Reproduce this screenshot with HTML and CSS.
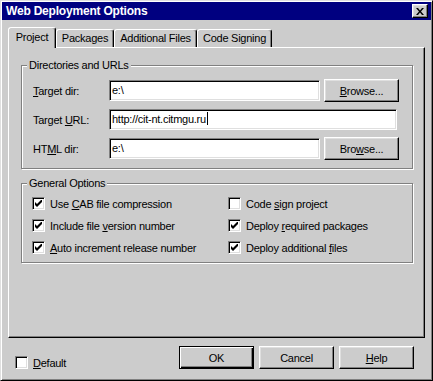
FILE: index.html
```html
<!DOCTYPE html>
<html lang="en">
<head>
    <meta charset="UTF-8">
    <meta name="viewport" content="width=device-width, initial-scale=1.0">
    <title>Web Deployment Options</title>
    <link rel="stylesheet" href="styles.css">
</head>
<body>
    <div class="window">
        <div class="titlebar">
            <span class="title">Web Deployment Options</span>
            <button class="close-btn">
                <svg width="8" height="7" viewBox="0 0 8 7"><path d="M0,0h2l2,2.5l2,-2.5h2l-3,3.5l3,3.5h-2l-2,-2.5l-2,2.5h-2l3,-3.5z" fill="#000"/></svg>
            </button>
        </div>
        <div class="content">
            <!-- Tabs -->
            <div class="tabs">
                <div class="tab active tab-project">Project</div>
                <div class="tab tab-packages">Packages</div>
                <div class="tab tab-files">Additional Files</div>
                <div class="tab tab-signing">Code Signing</div>
            </div>
            <div class="panel">
                <div class="group group-dirs">
                    <div class="group-title">Directories and URLs</div>
                    <div class="field-row first">
                        <span class="field-label"><u>T</u>arget dir:</span>
                        <div class="textbox short">e:\</div>
                        <button class="btn"><u>B</u>rowse...</button>
                    </div>
                    <div class="field-row">
                        <span class="field-label">Target <u>U</u>RL:</span>
                        <div class="textbox long">http://cit-nt.citmgu.ru<span class="caret"></span></div>
                    </div>
                    <div class="field-row">
                        <span class="field-label">HT<u>M</u>L dir:</span>
                        <div class="textbox short">e:\</div>
                        <button class="btn">Bro<u>w</u>se...</button>
                    </div>
                </div>
                <div class="group group-options">
                    <div class="group-title">General Options</div>
                    <div class="checks">
                        <div class="check"><span class="box"><svg width="7" height="7" viewBox="0 0 7 7"><path d="M0,2l2,2l5,-5v3l-5,5l-2,-2z" fill="#000"/></svg></span><span>Use <u>C</u>AB file compression</span></div>
                        <div class="check"><span class="box"></span><span>Code <u>s</u>ign project</span></div>
                        <div class="check"><span class="box"><svg width="7" height="7" viewBox="0 0 7 7"><path d="M0,2l2,2l5,-5v3l-5,5l-2,-2z" fill="#000"/></svg></span><span>Include file <u>v</u>ersion number</span></div>
                        <div class="check"><span class="box"><svg width="7" height="7" viewBox="0 0 7 7"><path d="M0,2l2,2l5,-5v3l-5,5l-2,-2z" fill="#000"/></svg></span><span>Deploy <u>r</u>equired packages</span></div>
                        <div class="check"><span class="box"><svg width="7" height="7" viewBox="0 0 7 7"><path d="M0,2l2,2l5,-5v3l-5,5l-2,-2z" fill="#000"/></svg></span><span><u>A</u>uto increment release number</span></div>
                        <div class="check"><span class="box"><svg width="7" height="7" viewBox="0 0 7 7"><path d="M0,2l2,2l5,-5v3l-5,5l-2,-2z" fill="#000"/></svg></span><span>Deploy additional <u>f</u>iles</span></div>
                    </div>
                </div>
            </div>
            <div class="footer">
                <div class="check default-check"><span class="box"></span><span><u>D</u>efault</span></div>
                <div class="buttons">
                    <button class="btn default-btn">OK</button>
                    <button class="btn">Cancel</button>
                    <button class="btn"><u>H</u>elp</button>
                </div>
            </div>
        </div>
    </div>
</body>
</html>
```

FILE: styles.css
```css
*{
    box-sizing: border-box;
}
body{
    margin: 0;
    font-family: "Liberation Sans", Arial, sans-serif;
    font-size: 11px;
    letter-spacing: -0.25px;
    color: black;
    background-color: #cccccc;
}
u{
    text-decoration-thickness: 1px;
    text-underline-offset: 1px;
}
.window{
    width: 433px;
    height: 381px;
    background-color: #cccccc;
    border: 1px solid;
    border-color: #dfdfdf #000 #000 #dfdfdf;
    box-shadow: inset 1px 1px #fff, inset -1px -1px #808080;
    padding: 1px;
}
.titlebar{
    display: flex;
    align-items: center;
    height: 18px;
    background-color: #000080;
    color: white;
    padding-left: 4px;
}
.title{
    font-weight: bold;
    font-size: 12px;
    letter-spacing: -0.2px;
}
.close-btn{
    margin-left: auto;
    margin-right: 3px;
    width: 16px;
    height: 14px;
    padding: 0;
    display: flex;
    align-items: center;
    justify-content: center;
    background-color: #cccccc;
    border: 1px solid;
    border-color: #fff #000 #000 #fff;
    box-shadow: inset -1px -1px #808080, inset 1px 1px #dfdfdf;
}
.close-btn svg{
    display: block;
}
.content{
    padding: 7px 6px 0;
}
/* tabs */
.tabs{
    display: flex;
    align-items: flex-end;
    height: 20px;
    position: relative;
    z-index: 1;
}
.tab{
    height: 18px;
    line-height: 16px;
    text-align: center;
    border: 1px solid;
    border-bottom: none;
    border-color: #fff #000 transparent #fff;
    border-radius: 3px 3px 0 0;
    box-shadow: inset -1px 0 #808080;
    background-color: #cccccc;
}
.tab.active{
    height: 21px;
    line-height: 18px;
    margin-bottom: -1px;
}
.tab-project{ width: 48px; }
.tab-packages{ width: 58px; }
.tab-files{ width: 83px; }
.tab-signing{ width: 75px; }
.panel{
    height: 291px;
    border: 1px solid;
    border-color: #fff #000 #000 #fff;
    box-shadow: inset -1px -1px #808080;
    padding: 17px 11px 0 12px;
}
/* group boxes */
.group{
    border: 1px solid #808080;
    box-shadow: inset 1px 1px #fff, 1px 1px #fff;
    padding-bottom: 8px;
}
.group-title{
    width: fit-content;
    margin: -7px 0 0 5px;
    padding: 0 2px;
    height: 13px;
    line-height: 13px;
    background-color: #cccccc;
}
.field-row{
    display: flex;
    align-items: center;
    height: 23px;
    margin-top: 6px;
    padding-left: 11px;
}
.field-row.first{
    margin-top: 7px;
}
.field-label{
    width: 76px;
}
.textbox{
    height: 21px;
    line-height: 19px;
    padding-left: 2px;
    background-color: white;
    border: 1px solid;
    border-color: #808080 #fff #fff #808080;
    box-shadow: inset 1px 1px #000, inset -1px -1px #dfdfdf;
    white-space: nowrap;
}
.textbox.short{
    width: 211px;
    margin-right: 4px;
}
.textbox.long{
    width: 288px;
}
.caret{
    display: inline-block;
    width: 1px;
    height: 13px;
    background-color: black;
    vertical-align: -2px;
    margin-left: 1px;
}
.btn{
    width: 75px;
    height: 23px;
    padding: 0;
    font-family: inherit;
    font-size: 11px;
    letter-spacing: -0.25px;
    color: black;
    background-color: #cccccc;
    border: 1px solid;
    border-color: #fff #000 #000 #fff;
    box-shadow: inset -1px -1px #808080, inset 1px 1px #dfdfdf;
}
.default-btn{
    border-color: #000;
    box-shadow: inset 1px 1px #fff, inset -1px -1px #000, inset -2px -2px #808080;
}
/* checkboxes */
.group-options{
    margin-top: 14px;
}
.checks{
    display: grid;
    grid-template-columns: 196px auto;
    row-gap: 9px;
    margin-top: 7px;
    padding-left: 10px;
}
.check{
    display: flex;
    align-items: center;
    height: 13px;
    white-space: nowrap;
}
.box{
    width: 13px;
    height: 13px;
    margin-right: 5px;
    padding: 2px;
    background-color: white;
    border: 1px solid;
    border-color: #808080 #fff #fff #808080;
    box-shadow: inset 1px 1px #000, inset -1px -1px #dfdfdf;
    flex-shrink: 0;
}
.box svg{
    display: block;
}
.footer{
    display: flex;
    padding: 8px 11px 0 7px;
}
.default-check{
    margin-top: 10px;
}
.buttons{
    margin-left: auto;
    display: flex;
    gap: 5px;
}
```
